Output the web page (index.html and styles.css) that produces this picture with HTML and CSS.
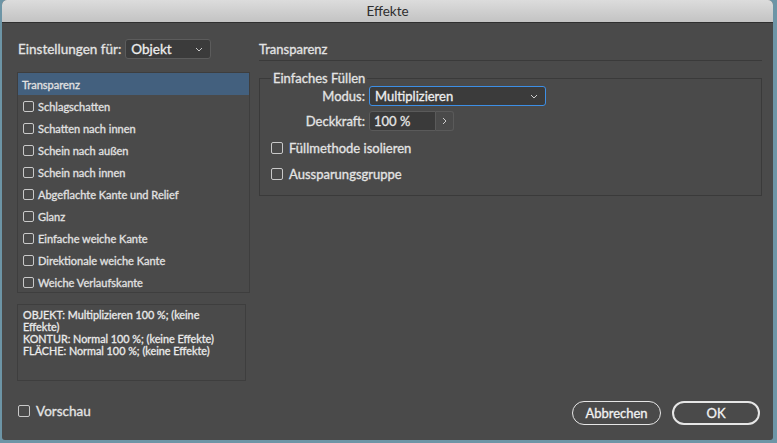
FILE: index.html
```html
<!DOCTYPE html>
<html>
<head>
  <meta charset="utf-8">
  <title>Effekte</title>
  <link rel="stylesheet" href="styles.css">
</head>
<body>
  <div class="window">
    <div class="titlebar">Effekte</div>

    <div class="content">
      <div class="left">
        <div class="settings-for">
          <span>Einstellungen für:</span>
          <div class="select small">
            <span>Objekt</span>
            <svg width="8" height="5" viewBox="0 0 8 5"><path d="M1 1l3 3 3-3" fill="none" stroke="#ccc" stroke-width="1"/></svg>
          </div>
        </div>

        <ul class="effect-list">
          <li class="active">Transparenz</li>
          <li><span class="box"></span>Schlagschatten</li>
          <li><span class="box"></span>Schatten nach innen</li>
          <li><span class="box"></span>Schein nach außen</li>
          <li><span class="box"></span>Schein nach innen</li>
          <li><span class="box"></span>Abgeflachte Kante und Relief</li>
          <li><span class="box"></span>Glanz</li>
          <li><span class="box"></span>Einfache weiche Kante</li>
          <li><span class="box"></span>Direktionale weiche Kante</li>
          <li><span class="box"></span>Weiche Verlaufskante</li>
        </ul>

        <div class="summary">
          OBJEKT: Multiplizieren 100 %; (keine Effekte)<br>
          KONTUR: Normal 100 %; (keine Effekte)<br>
          FLÄCHE: Normal 100 %; (keine Effekte)
        </div>
      </div>

      <div class="right">
        <div class="section-title">Transparenz</div>

        <fieldset class="group">
          <legend>Einfaches Füllen</legend>
          <div class="field">
            <label>Modus:</label>
            <div class="select wide focus">
              <span>Multiplizieren</span>
              <svg width="8" height="5" viewBox="0 0 8 5"><path d="M1 1l3 3 3-3" fill="none" stroke="#ccc" stroke-width="1"/></svg>
            </div>
          </div>
          <div class="field">
            <label>Deckkraft:</label>
            <div class="number">100 %</div>
            <div class="stepper">
              <svg width="5" height="8" viewBox="0 0 5 8"><path d="M1 1l3 3-3 3" fill="none" stroke="#ccc" stroke-width="1"/></svg>
            </div>
          </div>
          <div class="check"><span class="box"></span>Füllmethode isolieren</div>
          <div class="check"><span class="box"></span>Aussparungsgruppe</div>
        </fieldset>
      </div>
    </div>

    <div class="footer">
      <div class="check preview"><span class="box"></span>Vorschau</div>
      <div class="buttons">
        <button class="btn">Abbrechen</button>
        <button class="btn default">OK</button>
      </div>
    </div>
  </div>
</body>
</html>
```

FILE: styles.css
```css
html, body {
  margin: 0;
  height: 100%;
}
body {
  background: #6d95a6;
  font-family: "Lato", "Liberation Sans", sans-serif;
  color: #e4e4e4;
  overflow: hidden;
  -webkit-text-stroke: 0.3px currentColor;
}

.window {
  margin: 0 4px 0 2px;
  height: 440px;
  background: #4a4a4a;
  border-radius: 5px 5px 3px 3px;
  display: flex;
  flex-direction: column;
  box-sizing: border-box;
}

.titlebar {
  height: 22px;
  line-height: 23px;
  text-align: center;
  font-size: 13.5px;
  color: #2e2e2e;
  background: linear-gradient(#dcdcdc, #c3c3c3);
  border-bottom: 1px solid #2f2f2f;
  border-radius: 5px 5px 0 0;
  -webkit-text-stroke: 0;
}

.content {
  display: flex;
  padding: 16px 11px 0 15px;
  flex: 1;
}

/* linke Spalte */
.left {
  width: 231px;
}
.settings-for {
  display: flex;
  align-items: center;
  gap: 4px;
  font-size: 13.5px;
  padding-left: 1px;
}
.select {
  display: flex;
  align-items: center;
  justify-content: space-between;
  height: 20px;
  box-sizing: border-box;
  padding: 0 7px 0 5px;
  background: #3b3b3b;
  border: 1px solid #5c5c5c;
  border-radius: 3px;
  font-size: 13.5px;
  color: #eee;
}
.select.small {
  width: 86px;
}
.select.wide {
  width: 177px;
  font-size: 13px;
}
.select.focus {
  border-color: #3d8fe6;
}

.effect-list {
  list-style: none;
  margin: 13px 0 0;
  padding: 0;
  height: 221px;
  border: 1px solid #3e3e3e;
  box-sizing: border-box;
  width: 233px;
}
.effect-list li {
  height: 22px;
  display: flex;
  align-items: center;
  padding-left: 5px;
  font-size: 11px;
  color: #e2e2e2;
}
.effect-list li.active {
  background: #43607e;
  padding-left: 4px;
}
.box {
  display: inline-block;
  width: 11px;
  height: 11px;
  border: 1px solid #c9c9c9;
  border-radius: 2px;
  box-sizing: border-box;
  margin-right: 4px;
  flex: none;
}

.summary {
  margin-top: 11px;
  width: 229px;
  height: 77px;
  box-sizing: border-box;
  border: 1px solid #3e3e3e;
  padding: 4px 14px 4px 5px;
  font-size: 10.8px;
  line-height: 12px;
  color: #eaeaea;
}

/* rechte Spalte */
.right {
  flex: 1;
  margin-left: 11px;
}
.section-title {
  font-size: 13px;
  height: 21px;
  line-height: 21px;
  border-bottom: 1px solid #3a3a3a;
}

.group {
  margin: 9px 0 0;
  padding: 0 0 0 11px;
  border: 1px solid #3a3a3a;
  height: 126px;
  box-sizing: border-box;
}
.group legend {
  font-size: 13px;
  padding: 0 2px;
  margin-left: 0;
}
.field {
  display: flex;
  align-items: center;
  margin-top: 5px;
  font-size: 13px;
}
.field:first-of-type {
  margin-top: 0;
}
.field label {
  width: 94px;
  text-align: right;
  margin-right: 4px;
}
.number {
  width: 67px;
  height: 20px;
  box-sizing: border-box;
  background: #3a3a3a;
  border: 1px solid #5a5a5a;
  border-radius: 3px 0 0 3px;
  padding-left: 4px;
  line-height: 18px;
}
.stepper {
  width: 18px;
  height: 20px;
  box-sizing: border-box;
  border: 1px solid #5a5a5a;
  border-left: none;
  border-radius: 0 3px 3px 0;
  display: flex;
  align-items: center;
  justify-content: center;
}
.check {
  display: flex;
  align-items: center;
  height: 14px;
  font-size: 13px;
  margin-top: 10px;
}
.check .box {
  width: 12px;
  height: 12px;
  margin-right: 6px;
}
.group .check + .check {
  margin-top: 12px;
}

/* Fusszeile */
.footer {
  display: flex;
  align-items: center;
  justify-content: space-between;
  padding: 0 13px 15px 16px;
}
.preview {
  margin: 0 0 4px;
  font-size: 13.5px;
}
.buttons {
  display: flex;
  gap: 11px;
}
.btn {
  height: 24px;
  width: 89px;
  border-radius: 12px;
  background: transparent;
  border: 1.5px solid #e6e6e6;
  color: #f2f2f2;
  font-family: inherit;
  font-size: 13px;
  -webkit-text-stroke: 0.3px currentColor;
}
.btn.default {
  width: 88px;
  border-width: 2px;
}
```
